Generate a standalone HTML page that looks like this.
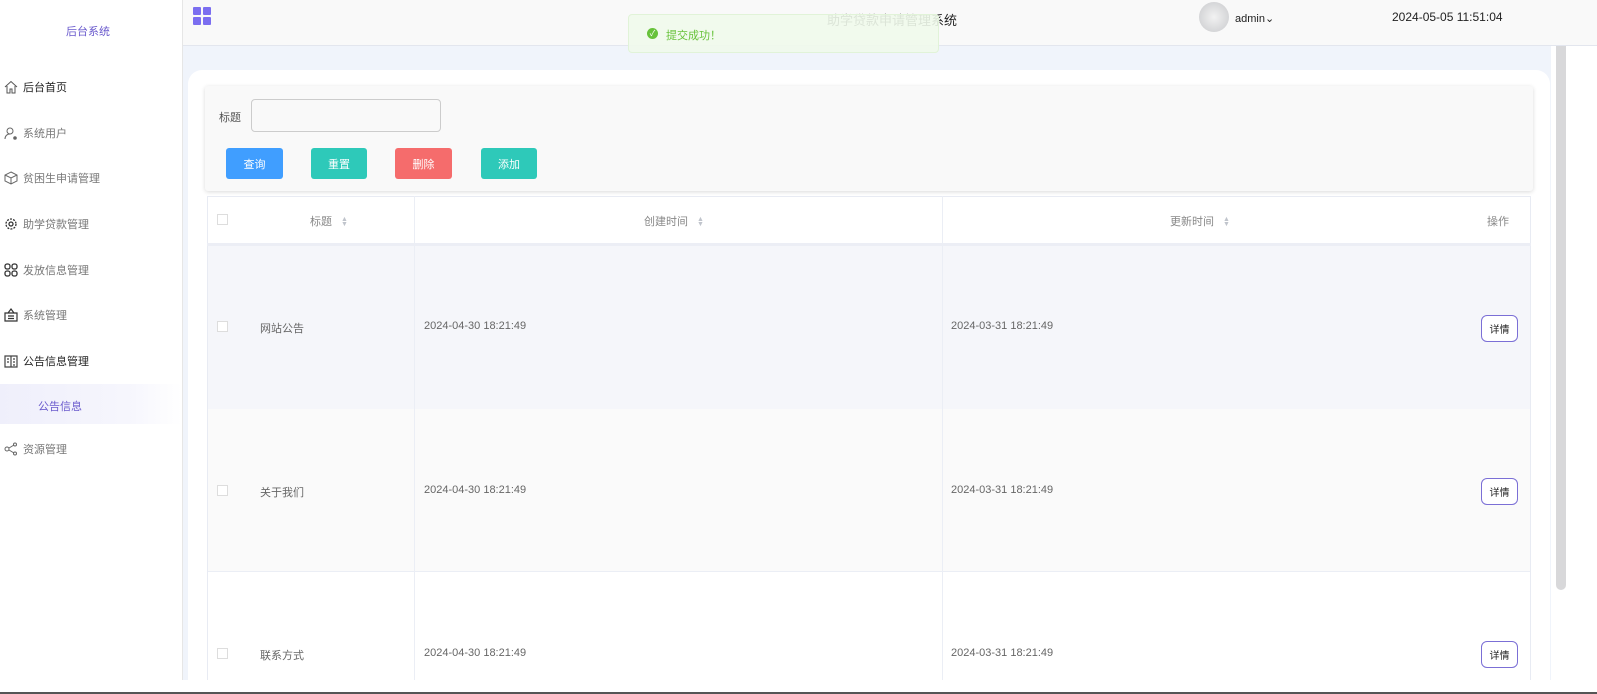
<!DOCTYPE html>
<html><head><meta charset="utf-8"><style>
*{margin:0;padding:0;box-sizing:border-box}
body{width:1597px;height:694px;overflow:hidden;font-family:"Liberation Sans","Noto Sans CJK SC",sans-serif;background:#f0f4fb;position:relative;font-size:11px;color:#555}
.abs{position:absolute}
.side{left:0;top:0;width:183px;height:694px;background:#fff;border-right:1px solid #e6e6e6}
.mi{position:absolute;left:4px;font-size:11px;color:#777;display:flex;align-items:center;gap:5px}
.mi svg{width:14px;height:14px}
.hdr{left:183px;top:0;width:1414px;height:46px;background:#f9f9f9;border-bottom:1px solid #e3e6ee}
.btn{position:absolute;top:148px;height:31px;border-radius:3px;color:#fff;font-size:11px;display:flex;align-items:center;justify-content:center}
.cell{position:absolute;font-size:11px;color:#666}
.det{position:absolute;left:1481px;width:37px;height:27px;border:1px solid #7b6fd6;border-radius:6px;background:#fff;font-size:10px;color:#222;display:flex;align-items:center;justify-content:center}
.cb{position:absolute;left:217px;width:11px;height:11px;border:1px solid #ddd;background:#fff}
.sort{display:inline-block;margin-left:9px;color:#c0c4cc;font-size:7px;line-height:5px;vertical-align:middle}
</style></head><body>
<div class="abs side">
 <div class="abs" style="left:66px;top:23px;font-size:11px;color:#6a5acd">后台系统</div>
 <div class="mi" style="top:79px;color:#222"><svg viewBox="0 0 14 14" fill="none" stroke="#555"><path d="M1 7L7 1.5 13 7M3 6v7h3V9h2v4h3V6"/></svg>后台首页</div>
 <div class="mi" style="top:125px"><svg viewBox="0 0 14 14" fill="none" stroke="#666"><circle cx="6" cy="5" r="3"/><path d="M1 13c0-3 2-5 5-5"/><circle cx="11" cy="12" r="1.3" fill="#666"/></svg>系统用户</div>
 <div class="mi" style="top:170px"><svg viewBox="0 0 14 14" fill="none" stroke="#666"><path d="M7 1l6 3v6l-6 3-6-3V4zM1 4l6 3 6-3M7 7v6"/></svg>贫困生申请管理</div>
 <div class="mi" style="top:216px"><svg viewBox="0 0 14 14" fill="none" stroke="#333" stroke-width="1.3"><circle cx="7" cy="7" r="2"/><circle cx="7" cy="7" r="5" stroke-dasharray="2 1.2"/></svg>助学贷款管理</div>
 <div class="mi" style="top:262px"><svg viewBox="0 0 14 14" fill="none" stroke="#333" stroke-width="1.3"><rect x="1" y="1" width="5" height="5" rx="2"/><rect x="8" y="1" width="5" height="5" rx="2"/><rect x="1" y="8" width="5" height="5" rx="2"/><rect x="8" y="8" width="5" height="5" rx="2"/></svg>发放信息管理</div>
 <div class="mi" style="top:307px"><svg viewBox="0 0 14 14" fill="none" stroke="#333" stroke-width="1.2"><path d="M7 1l3 4H4zM1 5h12v8H1zM4 8h6M4 10.5h6"/></svg>系统管理</div>
 <div class="mi" style="top:353px;color:#222"><svg viewBox="0 0 14 14" fill="none" stroke="#444" stroke-width="1.2"><path d="M1 2h12v11H1zM7 2v11M3 5h2M3 8h2M9 5h2M9 8h2M9 11h2"/></svg>公告信息管理</div>
 <div class="abs" style="left:0;top:384px;width:182px;height:40px;background:linear-gradient(90deg,#efeffb,#f6f6fd 70%,#fff)"></div>
 <div class="abs" style="left:38px;top:398px;color:#6a5acd;font-size:11px">公告信息</div>
 <div class="mi" style="top:441px"><svg viewBox="0 0 14 14" fill="none" stroke="#666"><circle cx="3" cy="7" r="2"/><circle cx="11" cy="2.5" r="1.5"/><circle cx="11" cy="11.5" r="1.5"/><path d="M5 6l5-3M5 8l5 3"/></svg>资源管理</div>
</div>
<div class="abs hdr">
 <svg class="abs" style="left:10px;top:7px" width="18" height="18" viewBox="0 0 18 18" fill="#7b6ef0"><rect x="0" y="0" width="8" height="8" rx="1"/><rect x="10" y="0" width="8" height="8" rx="1"/><rect x="0" y="10" width="8" height="8" rx="1"/><rect x="10" y="10" width="8" height="8" rx="1"/></svg>
 <div class="abs" style="left:644px;top:10px;font-size:13px;color:#222">助学贷款申请管理系统</div>
 <div class="abs" style="left:1016px;top:2px;width:30px;height:30px;border-radius:50%;background:radial-gradient(#f2f2f2,#c8c9cc)"></div>
 <div class="abs" style="left:1052px;top:12px;font-size:11px;color:#222">admin⌄</div>
 <div class="abs" style="left:1209px;top:10px;font-size:12px;color:#222">2024-05-05 11:51:04</div>
</div>
<div class="abs" style="left:628px;top:14px;width:311px;height:39px;background:rgba(240,249,235,.9);border:1px solid #e1f3d8;border-radius:4px">
 <div class="abs" style="left:18px;top:13px;width:11px;height:11px;border-radius:50%;background:#67c23a;color:#fff;font-size:8px;text-align:center;line-height:11px">✓</div>
 <div class="abs" style="left:37px;top:12px;color:#67c23a;font-size:11px">提交成功！</div>
</div>
<div class="abs" style="left:1551px;top:46px;width:46px;height:648px;background:#fff"></div>
<div class="abs" style="left:1556px;top:46px;width:10px;height:544px;background:#d8d8da;border-radius:0 0 5px 5px"></div>
<div class="abs" style="left:188px;top:70px;width:1362px;height:624px;background:#fff;border-radius:14px 14px 0 0"></div>
<div class="abs" style="left:205px;top:86px;width:1328px;height:105px;background:#f9f9f9;border-radius:3px;box-shadow:0 1px 4px rgba(0,0,0,.15)"></div>
<div class="abs" style="left:219px;top:109px;font-size:11px;color:#555">标题</div>
<div class="abs" style="left:251px;top:99px;width:190px;height:33px;border:1px solid #ccc;border-radius:4px;background:#f9f9f9"></div>
<div class="btn" style="left:226px;width:57px;background:#409eff">查询</div>
<div class="btn" style="left:311px;width:56px;background:#2ec9b9">重置</div>
<div class="btn" style="left:395px;width:57px;background:#f56c6c">删除</div>
<div class="btn" style="left:481px;width:56px;background:#2ec9b9">添加</div>
<div class="abs" style="left:207px;top:196px;width:1324px;height:498px;background:#fff;border:1px solid #e8ebf3"></div>
<div class="abs" style="left:207px;top:243px;width:1324px;height:3px;background:#eceef5"></div>
<div class="abs" style="left:208px;top:246px;width:1322px;height:163px;background:#f5f6fa"></div>
<div class="abs" style="left:208px;top:409px;width:1322px;height:163px;background:#fafafa;border-bottom:1px solid #ebeef5"></div>
<div class="abs" style="left:414px;top:196px;width:1px;height:498px;background:#ebeef5"></div>
<div class="abs" style="left:942px;top:196px;width:1px;height:498px;background:#ebeef5"></div>
<div class="cb" style="top:214px"></div>
<div class="cell" style="left:310px;top:213px;color:#888">标题<span class="sort">▲<br>▼</span></div>
<div class="cell" style="left:644px;top:213px;color:#888">创建时间<span class="sort">▲<br>▼</span></div>
<div class="cell" style="left:1170px;top:213px;color:#888">更新时间<span class="sort">▲<br>▼</span></div>
<div class="cell" style="left:1487px;top:213px;color:#888">操作</div>
<div class="cb" style="top:321px"></div>
<div class="cell" style="left:260px;top:320px">网站公告</div>
<div class="cell" style="left:424px;top:320px">2024-04-30 18:21:49</div>
<div class="cell" style="left:951px;top:320px">2024-03-31 18:21:49</div>
<div class="det" style="top:315px">详情</div>
<div class="cb" style="top:485px"></div>
<div class="cell" style="left:260px;top:484px">关于我们</div>
<div class="cell" style="left:424px;top:484px">2024-04-30 18:21:49</div>
<div class="cell" style="left:951px;top:484px">2024-03-31 18:21:49</div>
<div class="det" style="top:478px">详情</div>
<div class="cb" style="top:648px"></div>
<div class="cell" style="left:260px;top:647px">联系方式</div>
<div class="cell" style="left:424px;top:647px">2024-04-30 18:21:49</div>
<div class="cell" style="left:951px;top:647px">2024-03-31 18:21:49</div>
<div class="det" style="top:641px">详情</div>
<div class="abs" style="left:0;top:680px;width:1597px;height:14px;background:#fff"></div>
<div class="abs" style="left:0;top:692px;width:1597px;height:2px;background:#555"></div>
</body></html>
